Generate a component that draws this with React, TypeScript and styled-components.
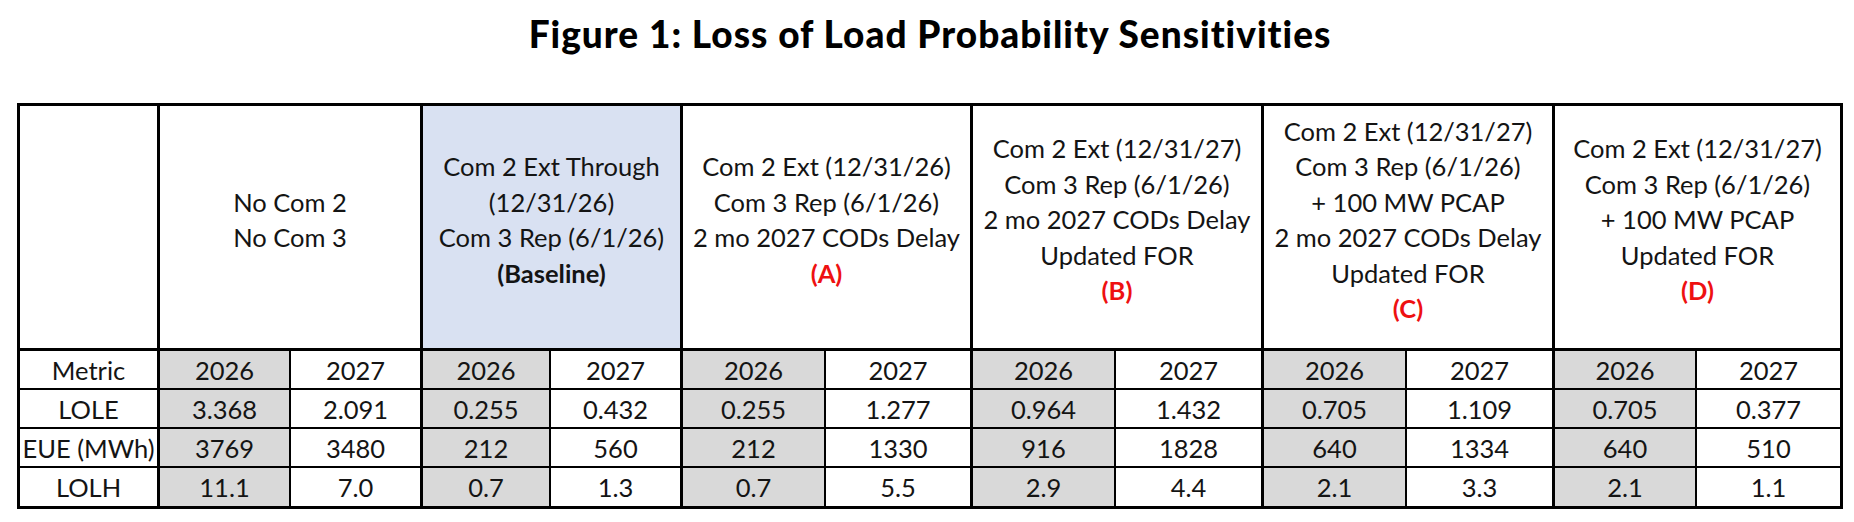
import React from "react";
import styled, { createGlobalStyle } from "styled-components";

const GlobalStyle = createGlobalStyle`
  html, body {
    margin: 0;
    padding: 0;
    background: #ffffff;
  }
  * { box-sizing: border-box; }
`;

const Page = styled.div`
  padding: 12px 0 0 17px;
  font-family: Lato, "Liberation Sans", sans-serif;
  color: #141414;
`;

const Title = styled.h1`
  margin: 0 0 48px 0;
  width: 1826px;
  text-align: center;
  font-family: Lato, "Liberation Sans", sans-serif;
  font-weight: 900;
  font-size: 37px;
  letter-spacing: 1px;
  line-height: 43px;
  color: #000000;
`;

const COLS = [140, 131, 132, 128, 132, 143, 147, 143, 148, 143, 148, 142, 146];

const Grid = styled.div`
  display: grid;
  grid-template-columns: ${COLS.map((c) => `${c}px`).join(" ")};
  grid-template-rows: 245px 39px 39px 39px 41px;
  width: fit-content;
  border-left: 3px solid #000;
  border-top: 3px solid #000;
`;

type Fill = "white" | "gray" | "blue";
const FILLS: Record<Fill, string> = {
  white: "#ffffff",
  gray: "#d9d9d9",
  blue: "#d9e1f2",
};

const Cell = styled.div<{ $fill?: Fill; $right: number; $bottom: number; $span?: number }>`
  grid-column: span ${(p) => p.$span ?? 1};
  background: ${(p) => FILLS[p.$fill ?? "white"]};
  border-right: ${(p) => p.$right}px solid #000;
  border-bottom: ${(p) => p.$bottom}px solid #000;
  display: flex;
  align-items: center;
  justify-content: center;
  font-size: 25.5px;
  white-space: nowrap;
`;

const HeaderCell = styled(Cell)`
  flex-direction: column;
  padding-bottom: 14px;
`;

const Line = styled.span<{ $tone?: "plain" | "bold" | "red" }>`
  display: block;
  line-height: 35.5px;
  text-align: center;
  font-weight: ${(p) => (p.$tone === "bold" || p.$tone === "red" ? 700 : 400)};
  color: ${(p) => (p.$tone === "red" ? "#ee1111" : "inherit")};
`;

type Scenario = {
  lines: { text: string; tone?: "plain" | "bold" | "red" }[];
  fill?: Fill;
};

const scenarios: Scenario[] = [
  { lines: [{ text: "No Com 2" }, { text: "No Com 3" }] },
  {
    fill: "blue",
    lines: [
      { text: "Com 2 Ext Through" },
      { text: "(12/31/26)" },
      { text: "Com 3 Rep (6/1/26)" },
      { text: "(Baseline)", tone: "bold" },
    ],
  },
  {
    lines: [
      { text: "Com 2 Ext (12/31/26)" },
      { text: "Com 3 Rep (6/1/26)" },
      { text: "2 mo 2027 CODs Delay" },
      { text: "(A)", tone: "red" },
    ],
  },
  {
    lines: [
      { text: "Com 2 Ext (12/31/27)" },
      { text: "Com 3 Rep (6/1/26)" },
      { text: "2 mo 2027 CODs Delay" },
      { text: "Updated FOR" },
      { text: "(B)", tone: "red" },
    ],
  },
  {
    lines: [
      { text: "Com 2 Ext (12/31/27)" },
      { text: "Com 3 Rep (6/1/26)" },
      { text: "+ 100 MW PCAP" },
      { text: "2 mo 2027 CODs Delay" },
      { text: "Updated FOR" },
      { text: "(C)", tone: "red" },
    ],
  },
  {
    lines: [
      { text: "Com 2 Ext (12/31/27)" },
      { text: "Com 3 Rep (6/1/26)" },
      { text: "+ 100 MW PCAP" },
      { text: "Updated FOR" },
      { text: "(D)", tone: "red" },
    ],
  },
];

const rows: { label: string; values: string[] }[] = [
  { label: "Metric", values: Array.from({ length: 6 }, () => ["2026", "2027"]).flat() },
  {
    label: "LOLE",
    values: ["3.368", "2.091", "0.255", "0.432", "0.255", "1.277", "0.964", "1.432", "0.705", "1.109", "0.705", "0.377"],
  },
  {
    label: "EUE (MWh)",
    values: ["3769", "3480", "212", "560", "212", "1330", "916", "1828", "640", "1334", "640", "510"],
  },
  {
    label: "LOLH",
    values: ["11.1", "7.0", "0.7", "1.3", "0.7", "5.5", "2.9", "4.4", "2.1", "3.3", "2.1", "1.1"],
  },
];

export default function App() {
  return (
    <>
      <GlobalStyle />
      <Page>
        <Title>Figure 1: Loss of Load Probability Sensitivities</Title>
        <Grid>
          <HeaderCell $right={3} $bottom={3} />
          {scenarios.map((s, i) => (
            <HeaderCell key={i} $span={2} $fill={s.fill} $right={3} $bottom={3}>
              {s.lines.map((l, j) => (
                <Line key={j} $tone={l.tone}>
                  {l.text}
                </Line>
              ))}
            </HeaderCell>
          ))}
          {rows.map((r, ri) => {
            const bottom = ri === rows.length - 1 ? 3 : 2;
            return (
              <React.Fragment key={r.label}>
                <Cell $right={3} $bottom={bottom}>
                  {r.label}
                </Cell>
                {r.values.map((v, vi) => (
                  <Cell
                    key={vi}
                    $fill={vi % 2 === 0 ? "gray" : "white"}
                    $right={vi % 2 === 0 ? 2 : 3}
                    $bottom={bottom}
                  >
                    {v}
                  </Cell>
                ))}
              </React.Fragment>
            );
          })}
        </Grid>
      </Page>
    </>
  );
}
